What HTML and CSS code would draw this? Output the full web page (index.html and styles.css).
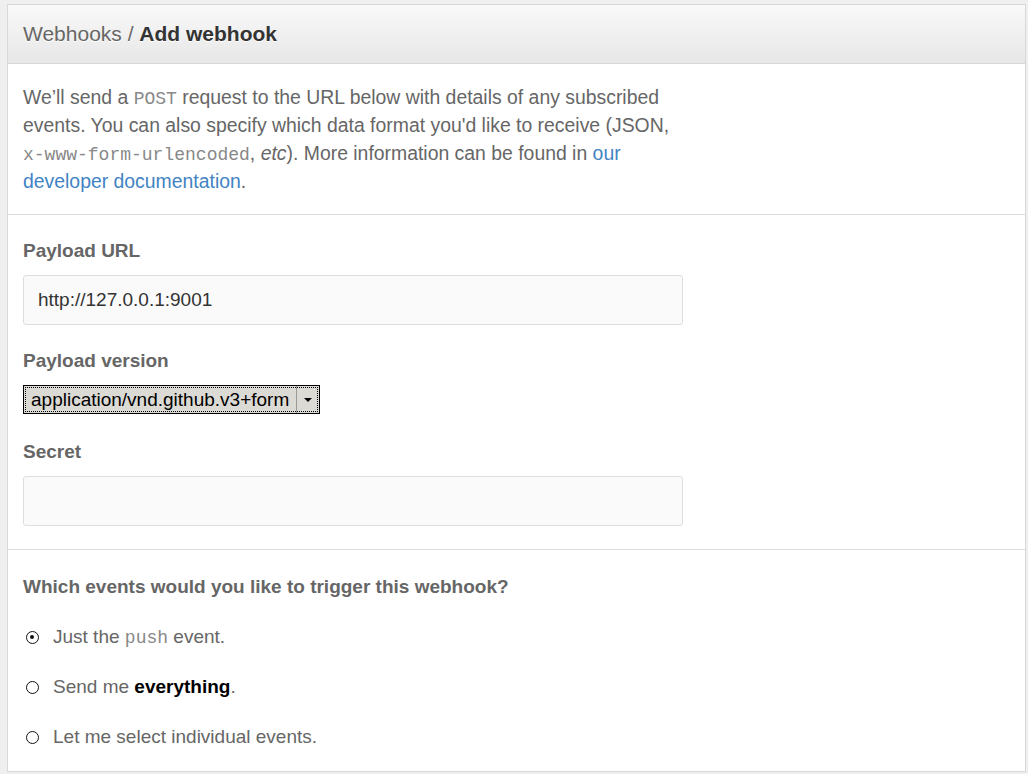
FILE: index.html
```html
<!DOCTYPE html>
<html>
<head>
<meta charset="utf-8">
<link rel="stylesheet" href="styles.css">
</head>
<body>
<div class="box">
  <div class="box-header">
    <span class="crumb">Webhooks /</span> <strong>Add webhook</strong>
  </div>
  <div class="section intro">
    <p>We’ll send a <code>POST</code> request to the URL below with details of any subscribed events. You can also specify which data format you'd like to receive (JSON, <code>x-www-form-urlencoded</code>, <em>etc</em>). More information can be found in <a href="#">our developer documentation</a>.</p>
  </div>
  <div class="section form">
    <label class="label">Payload URL</label>
    <div class="input">http://127.0.0.1:9001</div>
    <label class="label">Payload version</label>
    <div class="select"><span class="select-text">application/vnd.github.v3+form</span><span class="select-btn"><span class="arrow"></span></span></div>
    <label class="label">Secret</label>
    <div class="input"></div>
  </div>
  <div class="section events">
    <h3 class="label">Which events would you like to trigger this webhook?</h3>
    <div class="radio-row"><span class="radio checked"></span><span>Just the <code>push</code> event.</span></div>
    <div class="radio-row"><span class="radio"></span><span>Send me <b>everything</b>.</span></div>
    <div class="radio-row"><span class="radio"></span><span>Let me select individual events.</span></div>
  </div>
</div>
</body>
</html>
```
FILE: styles.css
```css
html, body {
  margin: 0;
  padding: 0;
}
body {
  background: #efefef;
  font-family: "Liberation Sans", Arial, sans-serif;
  color: #666;
  padding: 4px 2px 0 7px;
  height: 774px;
  box-sizing: border-box;
  overflow: hidden;
}
.box {
  background: #fff;
  border: 1px solid #d8d8d8;
  height: 768px;
  box-sizing: border-box;
}
.box-header {
  height: 59px;
  box-sizing: border-box;
  padding: 0 15px;
  background: linear-gradient(#f9f9f9, #e7e7e7);
  border-bottom: 1px solid #d8d8d8;
  font-size: 21px;
  line-height: 58px;
  color: #666;
  text-shadow: 0 1px 0 #fff;
}
.box-header strong {
  color: #333;
}
.section {
  padding: 0 15px;
  border-bottom: 1px solid #ddd;
}
.intro {
  padding-top: 19px;
  padding-bottom: 19px;
}
.intro p {
  margin: 0;
  width: 660px;
  font-size: 19.4px;
  line-height: 28px;
  color: #666;
}
code {
  font-family: "Liberation Mono", "Courier New", monospace;
  font-size: 18px;
  line-height: 0;
  white-space: nowrap;
  color: #888;
}
a {
  color: #4183c4;
  text-decoration: none;
}
.form {
  padding-top: 24px;
  padding-bottom: 23px;
}
.label {
  display: block;
  font-size: 19px;
  font-weight: bold;
  color: #666;
  margin: 0;
  line-height: 24px;
}
.input {
  box-sizing: border-box;
  width: 660px;
  height: 50px;
  margin: 12px 0 24px;
  background: #fafafa;
  border: 1px solid #ddd;
  border-radius: 3px;
  padding: 0 14px;
  display: flex;
  align-items: center;
  font-size: 19px;
  color: #333;
}
.form .input:last-child {
  margin-bottom: 0;
}
.select {
  display: inline-flex;
  box-sizing: border-box;
  height: 29px;
  margin: 12px 0 26px;
  border: 1px solid #000;
  background: #dcdad5;
  font-size: 19px;
  color: #000;
  align-items: stretch;
  outline: 1px dotted #000;
  outline-offset: -3px;
}
.select-text {
  display: flex;
  align-items: center;
  padding: 0 7px 0 7px;
}
.select-btn {
  width: 22px;
  border-left: 1px solid #9a9a9a;
  display: flex;
  align-items: center;
  justify-content: center;
}
.arrow {
  width: 0;
  height: 0;
  border-left: 4px solid transparent;
  border-right: 4px solid transparent;
  border-top: 4px solid #000;
}
.events {
  padding-top: 25px;
  border-bottom: none;
}
.radio-row {
  display: flex;
  align-items: center;
  gap: 14px;
  font-size: 19px;
  color: #666;
  margin-top: 26px;
  padding-left: 3px;
  line-height: 24px;
}
.radio-row + .radio-row {
  margin-top: 26px;
}
.radio-row b {
  color: #000;
}
.radio {
  width: 13px;
  height: 13px;
  box-sizing: border-box;
  border: 1.5px solid #111;
  border-radius: 50%;
  background: #fff;
  position: relative;
}
.radio.checked::after {
  content: "";
  position: absolute;
  left: 3px;
  top: 3px;
  width: 4px;
  height: 4px;
  border-radius: 50%;
  background: #111;
}
```
